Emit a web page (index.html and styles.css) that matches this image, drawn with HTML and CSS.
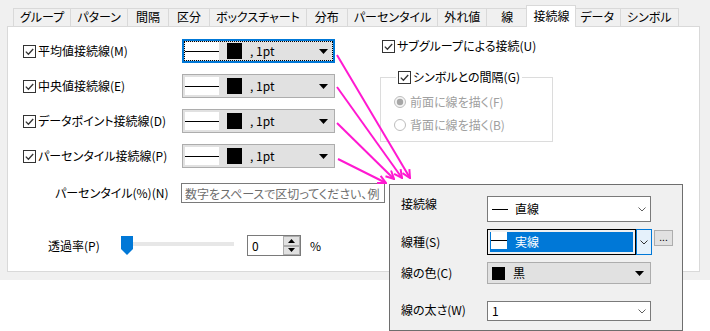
FILE: index.html
```html
<!DOCTYPE html>
<html lang="ja">
<head>
  <meta charset="UTF-8">
  <title>接続線</title>
  <link rel="stylesheet" href="styles.css">
</head>
<body>

  <div class="dialog">
    <!-- onglets -->
    <div class="tabs">
      <div class="tab">グループ</div>
      <div class="tab">パターン</div>
      <div class="tab">間隔</div>
      <div class="tab">区分</div>
      <div class="tab">ボックスチャート</div>
      <div class="tab">分布</div>
      <div class="tab">パーセンタイル</div>
      <div class="tab">外れ値</div>
      <div class="tab">線</div>
      <div class="tab active">接続線</div>
      <div class="tab">データ</div>
      <div class="tab">シンボル</div>
    </div>

    <div class="panel">
      <div class="top">

        <div class="line-grid">
          <label class="check">
            <svg width="13" height="13" viewBox="0 0 13 13"><rect x="0.5" y="0.5" width="12" height="12" fill="#fff" stroke="#333"/><path d="M2.8 6.6l2.6 2.6 4.8-5.2" fill="none" stroke="#333" stroke-width="1.3"/></svg>
            平均値接続線(M)
          </label>
          <div class="line-combo focus">
            <span class="sample"></span><span class="swatch"></span><span class="value">, 1pt</span>
            <svg class="caret" width="9" height="5" viewBox="0 0 9 5"><path d="M0 0h9L4.5 5z"/></svg>
          </div>

          <label class="check">
            <svg width="13" height="13" viewBox="0 0 13 13"><rect x="0.5" y="0.5" width="12" height="12" fill="#fff" stroke="#333"/><path d="M2.8 6.6l2.6 2.6 4.8-5.2" fill="none" stroke="#333" stroke-width="1.3"/></svg>
            中央値接続線(E)
          </label>
          <div class="line-combo">
            <span class="sample"></span><span class="swatch"></span><span class="value">, 1pt</span>
            <svg class="caret" width="9" height="5" viewBox="0 0 9 5"><path d="M0 0h9L4.5 5z"/></svg>
          </div>

          <label class="check">
            <svg width="13" height="13" viewBox="0 0 13 13"><rect x="0.5" y="0.5" width="12" height="12" fill="#fff" stroke="#333"/><path d="M2.8 6.6l2.6 2.6 4.8-5.2" fill="none" stroke="#333" stroke-width="1.3"/></svg>
            データポイント接続線(D)
          </label>
          <div class="line-combo">
            <span class="sample"></span><span class="swatch"></span><span class="value">, 1pt</span>
            <svg class="caret" width="9" height="5" viewBox="0 0 9 5"><path d="M0 0h9L4.5 5z"/></svg>
          </div>

          <label class="check">
            <svg width="13" height="13" viewBox="0 0 13 13"><rect x="0.5" y="0.5" width="12" height="12" fill="#fff" stroke="#333"/><path d="M2.8 6.6l2.6 2.6 4.8-5.2" fill="none" stroke="#333" stroke-width="1.3"/></svg>
            パーセンタイル接続線(P)
          </label>
          <div class="line-combo">
            <span class="sample"></span><span class="swatch"></span><span class="value">, 1pt</span>
            <svg class="caret" width="9" height="5" viewBox="0 0 9 5"><path d="M0 0h9L4.5 5z"/></svg>
          </div>
        </div>

        <div class="right-col">
          <label class="check sub">
            <svg width="13" height="13" viewBox="0 0 13 13"><rect x="0.5" y="0.5" width="12" height="12" fill="#fff" stroke="#333"/><path d="M2.8 6.6l2.6 2.6 4.8-5.2" fill="none" stroke="#333" stroke-width="1.3"/></svg>
            サブグループによる接続(U)
          </label>
          <fieldset class="group">
            <legend>
              <label class="check">
                <svg width="13" height="13" viewBox="0 0 13 13"><rect x="0.5" y="0.5" width="12" height="12" fill="#fff" stroke="#333"/><path d="M2.8 6.6l2.6 2.6 4.8-5.2" fill="none" stroke="#333" stroke-width="1.3"/></svg>
                シンボルとの間隔(G)
              </label>
            </legend>
            <div class="radio first">
              <svg width="12" height="12" viewBox="0 0 12 12"><circle cx="6" cy="6" r="5.5" fill="#f4f4f4" stroke="#bcbcbc"/><circle cx="6" cy="6" r="3.2" fill="#a6a6a6"/></svg>
              前面に線を描く(F)
            </div>
            <div class="radio">
              <svg width="12" height="12" viewBox="0 0 12 12"><circle cx="6" cy="6" r="5.5" fill="#fff" stroke="#bcbcbc"/></svg>
              背面に線を描く(B)
            </div>
          </fieldset>
        </div>

      </div>

      <div class="pct-row">
        <span class="label">パーセンタイル(%)(N)</span>
        <input type="text" placeholder="数字をスペースで区切ってください、例">
      </div>

      <div class="alpha-row">
        <span class="label">透過率(P)</span>
        <div class="slider">
          <span class="track"></span>
          <svg width="12" height="19" viewBox="0 0 12 19"><path d="M0 0H12V13L6 19L0 13Z" fill="#0078d7"/></svg>
        </div>
        <div class="spin">
          <span class="num">0</span>
          <div class="spin-btns">
            <span class="btn"><svg width="7" height="4" viewBox="0 0 7 4"><path d="M0 4h7L3.5 0z"/></svg></span>
            <span class="btn"><svg width="7" height="4" viewBox="0 0 7 4"><path d="M0 0h7L3.5 4z"/></svg></span>
          </div>
        </div>
        <span class="pct">%</span>
      </div>
    </div>
  </div>

  <!-- fenetre deroulante -->
  <div class="popup">
    <span class="plabel top">接続線</span>
    <div class="pcombo">
      <span class="dash"></span><span class="ptext">直線</span>
      <svg class="chev" width="8" height="5" viewBox="0 0 8 5"><path d="M0.5 0.5L4 4L7.5 0.5" fill="none" stroke="#606060"/></svg>
    </div>
    <span></span>

    <span class="plabel">線種(S)</span>
    <div class="pcombo-open">
      <div class="field">
        <div class="sel"><span class="stroke-box"></span><span class="ptext">実線</span></div>
      </div>
      <div class="drop">
        <svg width="8" height="5" viewBox="0 0 8 5"><path d="M0.5 0.5L4 4L7.5 0.5" fill="none" stroke="#333"/></svg>
      </div>
    </div>
    <div class="more">...</div>

    <span class="plabel">線の色(C)</span>
    <div class="pcombo gray">
      <span class="swatch"></span><span class="ptext">黒</span>
      <svg class="chev" width="9" height="5" viewBox="0 0 9 5"><path d="M0 0h9L4.5 5z"/></svg>
    </div>
    <span></span>

    <span class="plabel last">線の太さ(W)</span>
    <div class="pcombo last">
      <span>1</span>
      <svg class="chev" width="8" height="5" viewBox="0 0 8 5"><path d="M0.5 0.5L4 4L7.5 0.5" fill="none" stroke="#606060"/></svg>
    </div>
  </div>

  <svg class="arrows" width="710" height="331" viewBox="0 0 710 331">
    <defs>
      <marker id="head" viewBox="0 0 10 10" refX="9" refY="5" markerWidth="10" markerHeight="10" markerUnits="userSpaceOnUse" orient="auto">
        <path d="M1 1L9 5L1 9" fill="none" stroke="#ff19d1" stroke-width="2"/>
      </marker>
    </defs>
    <g stroke="#ff19d1" stroke-width="2" fill="none" marker-end="url(#head)">
      <line x1="337" y1="55" x2="410" y2="178"/>
      <line x1="337" y1="87" x2="402" y2="178"/>
      <line x1="337" y1="123" x2="394" y2="179"/>
      <line x1="338" y1="159" x2="386" y2="183"/>
    </g>
  </svg>

</body>
</html>
```

FILE: styles.css
```css
body {
  margin: 0;
  background: #fff;
  color: #000;
  font-family: "Noto Sans CJK JP", "Noto Sans", sans-serif;
  font-size: 12px;
  line-height: 16px;
  font-feature-settings: "palt";
}

.dialog {
  height: 280px;
  background: #f0f0f0;
}

/* onglets */
.tabs {
  display: flex;
  align-items: flex-end;
  height: 21px;
  padding: 5px 0 0 13px;
}

.tab {
  box-sizing: border-box;
  min-width: 42px;
  height: 18px;
  padding: 0 6px;
  border: 1px solid #d9d9d9;
  border-bottom: none;
  text-align: center;
  white-space: nowrap;
}

.tab + .tab {
  margin-left: -1px;
}

.tab.active {
  position: relative;
  z-index: 1;
  height: 22px;
  margin: 0 -2px -1px -2px;
  padding: 2px 6px 0;
  background: #fff;
}

.panel {
  box-sizing: border-box;
  width: 693px;
  height: 246px;
  margin-left: 7px;
  padding: 12px 0 0 15px;
  background: #fff;
  border: 1px solid #d9d9d9;
}

.top {
  display: flex;
  align-items: flex-start;
}

.line-grid {
  display: grid;
  grid-template-columns: 159px 153px;
  grid-auto-rows: 24px;
  row-gap: 11px;
  align-items: center;
}

.check {
  display: flex;
  align-items: center;
  gap: 2px;
  white-space: nowrap;
}

.check svg {
  flex: none;
}

.line-combo {
  box-sizing: border-box;
  display: flex;
  align-items: center;
  height: 24px;
  padding: 2px 6px 2px 2px;
  background: #e1e1e1;
  border: 1px solid #adadad;
}

.line-combo .sample {
  align-self: stretch;
  width: 34px;
  background: linear-gradient(#000, #000) center / 100% 1px no-repeat, #fff;
}

.line-combo .swatch {
  width: 15px;
  height: 16px;
  margin-left: 8px;
  background: #000;
}

.line-combo .value {
  margin-left: 8px;
}

.line-combo .caret {
  margin-left: auto;
}

.line-combo.focus {
  position: relative;
  border-color: #0078d7;
  box-shadow: inset 0 0 0 1px #0078d7;
}

.line-combo.focus::after {
  content: "";
  position: absolute;
  inset: 1px;
  border: 1px dotted #000;
}

.right-col {
  margin: -1px 0 0 45px;
}

.right-col .sub {
  padding-left: 2px;
}

.group {
  box-sizing: border-box;
  width: 173px;
  margin: 15px 0 0;
  padding: 0 0 8px 13px;
  border: 1px solid #dcdcdc;
}

.group legend {
  margin-left: 2px;
  padding: 0 2px;
}

.radio {
  display: flex;
  align-items: center;
  gap: 4px;
  height: 16px;
  margin-top: 7px;
  color: #a0a0a0;
  white-space: nowrap;
}

.radio.first {
  margin-top: 9px;
}

.pct-row {
  display: flex;
  align-items: center;
  margin-top: 15px;
  padding-left: 32px;
}

.pct-row .label {
  width: 126px;
}

.pct-row input {
  box-sizing: border-box;
  width: 204px;
  height: 20px;
  margin: 0;
  padding: 0 3px;
  border: 1px solid #7a7a7a;
  font: inherit;
  font-feature-settings: "palt";
}

.pct-row input::placeholder {
  color: #6d6d6d;
}

.alpha-row {
  display: flex;
  align-items: center;
  margin-top: 32px;
  padding-left: 25px;
}

.alpha-row .label {
  width: 73px;
}

.slider {
  position: relative;
  width: 113px;
  height: 19px;
}

.slider .track {
  position: absolute;
  left: 0;
  right: 0;
  top: 6px;
  height: 4px;
  background: #e7e7e7;
}

.slider svg {
  position: relative;
  display: block;
}

.spin {
  box-sizing: border-box;
  display: flex;
  width: 54px;
  height: 21px;
  margin-left: 13px;
  background: #fff;
  border: 1px solid #7a7a7a;
}

.spin .num {
  flex: 1;
  padding-left: 4px;
  line-height: 19px;
}

.spin-btns {
  display: flex;
  flex-direction: column;
  width: 17px;
}

.spin .btn {
  flex: 1;
  display: flex;
  align-items: center;
  justify-content: center;
  background: #e1e1e1;
  border: 1px solid #adadad;
}

.pct {
  margin-left: 9px;
}

/* popup */
.popup {
  position: absolute;
  left: 389px;
  top: 184px;
  box-sizing: border-box;
  width: 294px;
  height: 147px;
  padding: 11px 0 0 11px;
  display: grid;
  grid-template-columns: 86px 165px auto;
  grid-template-rows: 26px 26px 22px 30px;
  row-gap: 7px;
  align-content: start;
  background: #f0f0f0;
  border: 1px solid #6e6e6e;
}

.plabel {
  align-self: center;
  white-space: nowrap;
}

.plabel.top {
  align-self: start;
}

.plabel.last {
  align-self: end;
  padding-bottom: 3px;
}

.pcombo {
  box-sizing: border-box;
  display: flex;
  align-items: center;
  width: 164px;
  padding: 0 4px 0 4px;
  background: #fff;
  border: 1px solid #7a7a7a;
}

.pcombo.last {
  align-self: end;
  height: 20px;
}

.pcombo .chev {
  margin-left: auto;
}

.pcombo .dash {
  width: 16px;
  height: 1px;
  background: #000;
}

.pcombo .ptext {
  margin-left: 7px;
}

.pcombo.gray {
  padding-right: 6px;
  background: #e1e1e1;
  border-color: #adadad;
}

.pcombo .swatch {
  width: 13px;
  height: 13px;
  background: #000;
}

.pcombo.gray .ptext {
  margin-left: 8px;
}

.pcombo-open {
  display: flex;
}

.pcombo-open .field {
  flex: 1;
  display: flex;
  padding: 2px;
  border: 1px solid #000;
}

.pcombo-open .sel {
  flex: 1;
  display: flex;
  align-items: center;
  padding-left: 1px;
  color: #fff;
  background: #0078d7;
}

.pcombo-open .stroke-box {
  align-self: flex-start;
  width: 16px;
  height: 17px;
  background: linear-gradient(#000, #000) center / 100% 1px no-repeat, #fff;
}

.pcombo-open .ptext {
  margin-left: 8px;
}

.pcombo-open .drop {
  box-sizing: border-box;
  display: flex;
  align-items: center;
  justify-content: center;
  width: 16px;
  background: #e5f1fb;
  border: 1px solid #0078d7;
}

.more {
  box-sizing: border-box;
  align-self: start;
  width: 19px;
  height: 16px;
  margin: 1px 0 0 2px;
  background: #e1e1e1;
  border: 1px solid #adadad;
  font-size: 10px;
  line-height: 11px;
  text-align: center;
}

.arrows {
  position: absolute;
  left: 0;
  top: 0;
  pointer-events: none;
}
```
